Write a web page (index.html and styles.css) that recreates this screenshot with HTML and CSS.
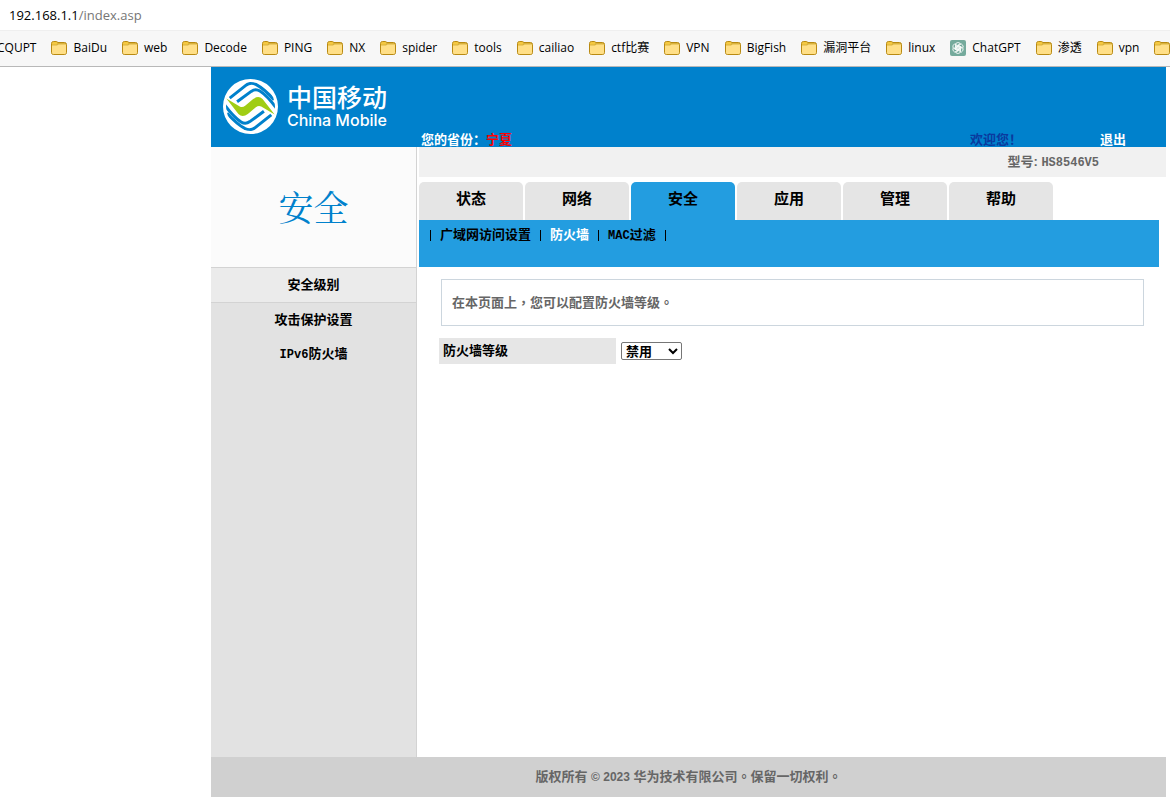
FILE: index.html
```html
<!DOCTYPE html>
<html lang="zh-CN">
<head>
<meta charset="utf-8">
<title>HS8546V5</title>
<link rel="stylesheet" href="styles.css">
</head>
<body>
<svg class="defs" aria-hidden="true">
  <symbol id="folder" viewBox="0 0 16 16">
    <path d="M.5 3.500Q.5 1.500 2.500 1.500H5.500L7 2.500H13.500Q15.500 2.500 15.500 4.500V12.500Q15.500 14.500 13.500 14.500H2.500Q.5 14.500.5 12.500Z" fill="#d9b23c" stroke="#b98a12"/>
    <path d="M1 5.500H6L7.500 4.500H15V12.500Q15 14 13.500 14H2.500Q1 14 1 12.500Z" fill="#ffdf87"/>
    <path d="M1 4.500V3.500Q1 2 2.500 2H5.200L6.500 3L5.500 4.500Z" fill="#f5c840"/>
  </symbol>
</svg>
<div class="address"><span class="host">192.168.1.1</span>/index.asp</div>
<nav class="bookmarks" aria-label="书签">
  <a href="#"><svg><use href="#folder"/></svg>CQUPT</a>
  <a href="#"><svg><use href="#folder"/></svg>BaiDu</a>
  <a href="#"><svg><use href="#folder"/></svg>web</a>
  <a href="#"><svg><use href="#folder"/></svg>Decode</a>
  <a href="#"><svg><use href="#folder"/></svg>PING</a>
  <a href="#"><svg><use href="#folder"/></svg>NX</a>
  <a href="#"><svg><use href="#folder"/></svg>spider</a>
  <a href="#"><svg><use href="#folder"/></svg>tools</a>
  <a href="#"><svg><use href="#folder"/></svg>cailiao</a>
  <a href="#"><svg><use href="#folder"/></svg>ctf比赛</a>
  <a href="#"><svg><use href="#folder"/></svg>VPN</a>
  <a href="#"><svg><use href="#folder"/></svg>BigFish</a>
  <a href="#"><svg><use href="#folder"/></svg>漏洞平台</a>
  <a href="#"><svg><use href="#folder"/></svg>linux</a>
  <a href="#"><svg viewBox="0 0 16 16"><rect width="16" height="16" rx="2" fill="#74aa9c"/><g fill="none" stroke="#fff" stroke-width=".8"><g id="petals"><path id="petal" d="M5.500 9.500V5Q5.500 2.500 8 2.500T10.300 4.500L7 6.500V10"/><use href="#petal" transform="rotate(60 8 8)"/><use href="#petal" transform="rotate(120 8 8)"/></g><use href="#petals" transform="rotate(180 8 8)"/></g></svg>ChatGPT</a>
  <a href="#"><svg><use href="#folder"/></svg>渗透</a>
  <a href="#"><svg><use href="#folder"/></svg>vpn</a>
  <a href="#" aria-label="更多"><svg><use href="#folder"/></svg></a>
</nav>
<div class="page">
  <header class="banner">
    <div class="brand">
      <svg class="logo" viewBox="0 0 164 164" role="img" aria-label="中国移动">
        <clipPath id="disc"><circle cx="82" cy="82" r="73"/></clipPath>
        <circle cx="82" cy="82" r="82" fill="#fff"/>
        <g clip-path="url(#disc)" fill="none" stroke="#0081cc" stroke-width="9">
          <g id="waves">
            <path d="M42 68L84 37Q97 28 110 36Q132 50 160 88"/>
            <path d="M20 57L68 19Q82 8 98 16Q124 30 152 62"/>
          </g>
          <use href="#waves" transform="rotate(180 82 82)"/>
        </g>
        <path d="M10 58L50 82Q58 86 66 80L90 60Q106 48 118 60L154 106L114 82Q106 78 98 84L74 104Q58 116 46 104Z" fill="#a0cd14"/>
      </svg>
      <div class="wordmark"><span class="zh">中国移动</span><span class="en">China Mobile</span></div>
    </div>
    <p class="province">您的省份：<span>宁夏</span></p>
    <p class="welcome">欢迎您！</p>
    <a class="logout" href="#">退出</a>
  </header>
  <div class="body">
    <aside class="side">
      <h1>安全</h1>
      <nav>
        <a class="on" href="#">安全级别</a>
        <a href="#">攻击保护设置</a>
        <a href="#"><span class="code">IPv6</span>防火墙</a>
      </nav>
    </aside>
    <main class="main">
      <div class="model">型号: <span class="code">HS8546V5</span></div>
      <nav class="tabs">
        <a href="#">状态</a><a href="#">网络</a><a class="on" href="#">安全</a><a href="#">应用</a><a href="#">管理</a><a href="#">帮助</a>
      </nav>
      <nav class="subnav">
        <i></i><a href="#">广域网访问设置</a><i></i><a class="on" href="#">防火墙</a><i></i><a href="#"><span class="code">MAC</span>过滤</a><i></i>
      </nav>
      <div class="content">
        <p class="note">在本页面上<span class="mid" lang="zh-TW">，</span>您可以配置防火墙等级<span class="mid" lang="zh-TW">。</span></p>
        <div class="field">
          <label for="level">防火墙等级</label>
          <select id="level"><option>禁用</option><option>低</option><option>中</option><option>高</option></select>
        </div>
      </div>
    </main>
  </div>
  <footer class="foot">版权所有 <span class="year">© 2023</span> 华为技术有限公司<span class="mid" lang="zh-TW">。</span>保留一切权利<span class="mid" lang="zh-TW">。</span></footer>
</div>
</body>
</html>
```
FILE: styles.css
```css
* { box-sizing: border-box; }
body {
  margin: 0;
  background: #fff;
  color: #000;
  font: bold 13px/16px "Liberation Sans", "Noto Sans CJK SC", sans-serif;
  overflow-x: hidden;
}
p, h1 { margin: 0; }
a { color: inherit; text-decoration: none; }
.defs { position: absolute; width: 0; height: 0; }
.code { font-family: "Liberation Mono", monospace; font-size: 12px; }
.mid { font-family: "Noto Sans CJK TC", sans-serif; }

.address {
  height: 30px;
  padding-left: 9px;
  font: 13px/30px "Open Sans", sans-serif;
  color: #767676;
}
.host { color: #000; }
.bookmarks {
  display: flex;
  gap: 15px;
  height: 37px;
  margin-left: -25px;
  background: #f7f7f7;
  border-top: 1px solid #efefef;
  border-bottom: 1px solid #b8b8b8;
  font: 12px/34px "Open Sans", "Noto Sans CJK SC", sans-serif;
  white-space: nowrap;
  overflow: hidden;
}
.bookmarks a { display: flex; align-items: center; gap: 6px; height: 34px; flex: none; }
.bookmarks svg { width: 16px; height: 16px; }

.page { margin: 0 4px 0 211px; }
.banner {
  display: flex;
  align-items: flex-end;
  height: 80px;
  background: #0081cc;
  color: #fff;
  line-height: 14px;
}
.brand { display: flex; align-items: center; gap: 9px; width: 210px; height: 80px; padding: 0 0 2px 12px; }
.logo { width: 55px; height: 55px; }
.wordmark { display: flex; flex-direction: column; white-space: nowrap; }
.zh { font: 500 25px/28px "Noto Sans CJK SC", sans-serif; }
.en { font: 500 16px/20px "Inter", sans-serif; }
.province { flex: 1; }
.province span { color: #f00; }
.welcome { width: 130px; color: #0a3a9e; }
.logout { width: 66px; }

.body { display: flex; min-height: 610px; }
.side { width: 206px; background: #e2e2e2; border-right: 1px solid #d3d3d3; text-align: center; }
.side h1 {
  height: 120px;
  background: #fbfbfb;
  color: #0081cc;
  font: 35px/118px "Noto Serif CJK SC", "Noto Sans CJK SC", serif;
}
.side nav { display: flex; flex-direction: column; }
.side nav a { height: 34px; line-height: 34px; }
.side nav .on { height: 36px; background: #ebebeb; border: solid #d3d3d3; border-width: 1px 0; }

.main { flex: 1; padding-left: 2px; }
.model { height: 30px; padding-right: 67px; background: #f1f1f1; color: #666; line-height: 30px; text-align: right; }
.tabs { display: flex; gap: 2px; padding-top: 5px; }
.tabs a {
  width: 104px;
  height: 38px;
  border-radius: 5px 5px 0 0;
  background: #e5e5e5;
  font-size: 15px;
  line-height: 33px;
  text-align: center;
}
.tabs .on { background: #239de0; }
.subnav { display: flex; gap: 9px; height: 47px; margin-right: 7px; padding: 7px 11px; background: #239de0; }
.subnav i { width: 1px; height: 11px; margin-top: 3px; background: #000; }
.subnav .on { color: #fff; }
.content { padding: 12px 22px 0 20px; }
.note { margin-left: 2px; padding: 14px 10px; border: 1px solid #ccd6de; color: #666; line-height: 17px; }
.note .mid, .foot .mid { line-height: 1; }
.field { display: flex; align-items: center; gap: 5px; margin-top: 12px; }
.field label { width: 177px; height: 26px; padding-left: 4px; background: #e6e6e6; line-height: 26px; }
.field select {
  width: 61px;
  height: 18px;
  padding: 0;
  border: 1px solid #767676;
  border-radius: 2px;
  background: #fff;
  color: #000;
  font: inherit;
}
.foot { height: 40px; background: #d0d0d0; color: #666; line-height: 40px; text-align: center; }
.year { font-size: 12px; }
```
